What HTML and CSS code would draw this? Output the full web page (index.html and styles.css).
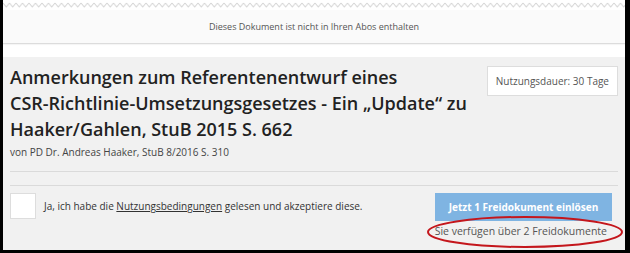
FILE: index.html
```html
<!DOCTYPE html>
<html lang="de">
<head>
    <meta charset="UTF-8">
    <meta name="viewport" content="width=device-width, initial-scale=1.0">
    <link rel="stylesheet" href="styles.css">
    <title>Dokument freischalten</title>
</head>
<body>
    <div class="sheet">
        <div class="tear">
            <svg width="100%" height="10" aria-hidden="true">
                <defs>
                    <pattern id="zig" width="6.5" height="10" patternUnits="userSpaceOnUse">
                        <polyline points="0,3 3.25,7 6.5,3" fill="none" stroke="#d4d4d4" stroke-width="1"/>
                    </pattern>
                </defs>
                <rect width="100%" height="10" fill="url(#zig)"/>
            </svg>
        </div>
        <div class="notice">Dieses Dokument ist nicht in Ihren Abos enthalten</div>

        <div class="doc">
            <div class="doc-head">
                <div class="doc-info">
                    <h1 class="doc-title">Anmerkungen zum Referentenentwurf eines <span class="nobreak">CSR-Richtlinie-Umsetzungsgesetzes</span> - Ein „Update“ zu Haaker/Gahlen, StuB 2015 S. 662</h1>
                    <p class="doc-meta">von PD Dr. Andreas Haaker, StuB 8/2016 S. 310</p>
                </div>
                <div class="badge">Nutzungsdauer: 30 Tage</div>
            </div>

            <hr class="rule">
            <hr class="rule">

            <div class="doc-foot">
                <label class="terms">
                    <span class="checkbox"></span>
                    <span>Ja, ich habe die <a href="#">Nutzungsbedingungen</a> gelesen und akzeptiere diese.</span>
                </label>
                <div class="redeem">
                    <button class="btn">Jetzt 1 Freidokument einlösen</button>
                    <div class="credits">
                        Sie verfügen über 2 Freidokumente
                        <!-- red marker drawn over the screenshot -->
                        <svg class="marker" width="200" height="34" aria-hidden="true">
                            <ellipse cx="100" cy="17" rx="97" ry="15" fill="none" stroke="#c4161c" stroke-width="2"/>
                        </svg>
                    </div>
                </div>
            </div>
        </div>
    </div>
</body>
</html>
```

FILE: styles.css
```css
* {
    box-sizing: border-box;
    font-family: "Open Sans", "Liberation Sans", sans-serif;
}

body {
    margin: 0;
    height: 253px;
    background-color: #000;
    overflow: hidden;
}

.sheet {
    display: flex;
    flex-direction: column;
    height: 250px;
    margin: 0 5px 0 3px;
    background-color: #fff;
}

.tear {
    height: 10px;
    background-color: #fff;
}

.tear svg {
    display: block;
}

.notice {
    height: 34px;
    padding-top: 10px;
    text-align: center;
    font-size: 9px;
    color: #555;
    background-color: #fafafa;
    border-bottom: 1px solid #dcdcdc;
    box-shadow: 0 1px 1px rgba(0, 0, 0, 0.04);
}

.doc {
    flex: 1;
    margin-top: 13px;
    padding: 7px 7px 0 7px;
    background-color: #f1f1f1;
}

.doc-head {
    display: flex;
    justify-content: space-between;
    align-items: flex-start;
}

.doc-title {
    margin: 0;
    width: 460px;
    font-size: 18px;
    font-weight: 600;
    line-height: 26px;
    color: #222;
}

.nobreak {
    white-space: nowrap;
}

.doc-meta {
    margin: 3px 0 0 0;
    font-size: 10px;
    color: #444;
}

.badge {
    margin-top: 2px;
    padding: 7px 8px;
    font-size: 10px;
    color: #555;
    background-color: #fff;
    border: 1px solid #ddd;
}

.rule {
    margin: 0;
    border: 0;
    border-top: 1px solid #dadada;
}

.rule:first-of-type {
    margin-top: 12px;
    margin-bottom: 13px;
}

.doc-foot {
    display: flex;
    justify-content: space-between;
    align-items: flex-start;
    padding-top: 7px;
}

.terms {
    display: flex;
    align-items: center;
    gap: 8px;
    font-size: 10px;
    color: #333;
}

.terms a {
    color: #333;
    text-decoration: underline;
}

.checkbox {
    width: 26px;
    height: 26px;
    background-color: #fff;
    border: 1px solid #ddd;
}

.redeem {
    display: flex;
    flex-direction: column;
    align-items: flex-end;
    margin-right: 6px;
}

.btn {
    width: 177px;
    height: 28px;
    padding: 0;
    font-size: 10px;
    font-weight: 700;
    color: #fff;
    background-color: #7fb4e2;
    border: 0;
}

.credits {
    position: relative;
    margin-top: 3px;
    margin-right: 5px;
    font-size: 10.5px;
    color: #555;
}

.marker {
    position: absolute;
    left: -10px;
    top: -9px;
}
```
